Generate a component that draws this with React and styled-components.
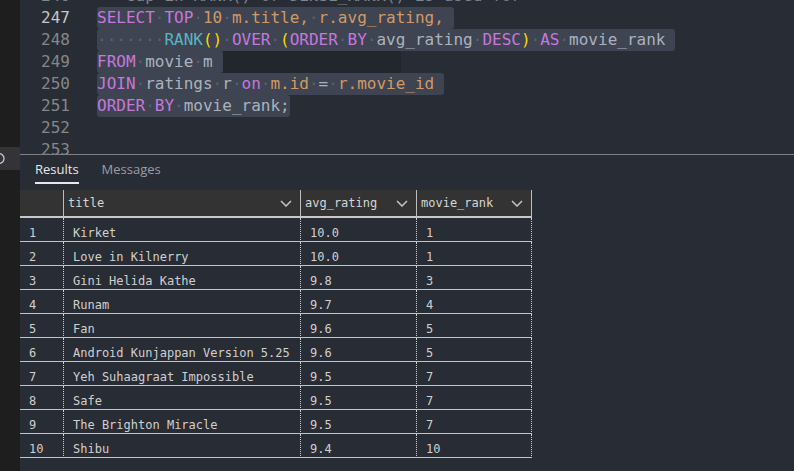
import React from "react";
import styled, { createGlobalStyle } from "styled-components";

const GlobalStyle = createGlobalStyle`
  html, body {
    margin: 0;
    padding: 0;
    background: #282c34;
  }
  body {
    width: 794px;
    height: 471px;
    overflow: hidden;
  }
`;

const Screen = styled.div`
  display: flex;
  width: 794px;
  height: 471px;
  background: #282c34;
  overflow: hidden;
`;

const ActivityStrip = styled.div`
  width: 20px;
  flex-shrink: 0;
  background: #1e1e1e;
  display: flex;
  flex-direction: column;
  padding-top: 147px;
  box-sizing: border-box;
`;

const StripButton = styled.div`
  height: 23px;
  background: #333338;
  display: flex;
  align-items: center;
`;

const Main = styled.div`
  flex: 1;
  display: flex;
  flex-direction: column;
  min-width: 0;
`;

const Editor = styled.div`
  height: 154px;
  flex-shrink: 0;
  overflow: hidden;
  display: flex;
  font-family: "DejaVu Sans Mono", monospace;
  font-size: 16px;
`;

const Gutter = styled.div`
  width: 50px;
  margin-top: -15px;
  text-align: right;
  flex-shrink: 0;
`;

const LineNo = styled.div`
  height: 22px;
  line-height: 22px;
  color: ${({ $active }) => ($active ? "#c6c6c6" : "#858889")};
`;

const Code = styled.div`
  flex: 1;
  margin-top: -15px;
  padding-left: 27px;
`;

const CodeLine = styled.div`
  height: 22px;
  line-height: 22px;
  display: flex;
  white-space: pre;
`;

const Selection = styled.span`
  display: inline-block;
  height: 22px;
  background: #3e4451;
  border-radius: 3px;
  padding-right: ${({ $tail }) => ($tail ? "10px" : "0")};
`;

const HoverGap = styled.span`
  display: inline-block;
  height: 22px;
  width: 178px;
  background: #22262d;
  border-radius: 3px;
`;

const Tok = styled.span`
  color: ${({ $c }) => $c};
`;

const Divider = styled.div`
  height: 1px;
  background: #7d8087;
  flex-shrink: 0;
`;

const Panel = styled.div`
  flex: 1;
  display: flex;
  flex-direction: column;
`;

const TabBar = styled.div`
  display: flex;
  gap: 23px;
  padding-left: 15px;
  margin-bottom: 6px;
`;

const Tab = styled.div`
  font-family: "Open Sans", "Noto Sans", sans-serif;
  font-size: 13px;
  line-height: 16px;
  padding: 6px 0 5px;
  color: ${({ $active }) => ($active ? "#e8e8e8" : "#9a9ea6")};
  border-bottom: 2px solid ${({ $active }) => ($active ? "#e8e8e8" : "transparent")};
`;

const Grid = styled.div`
  display: grid;
  grid-template-columns: 43px 237px 116px 116px;
  width: 512px;
  font-family: "DejaVu Sans Mono", monospace;
  font-size: 12px;
  color: #d0d0d0;
`;

const HeadCell = styled.div`
  height: 26px;
  background: #333333;
  border-bottom: 2px solid #c8c8c8;
  border-left: ${({ $first }) => ($first ? "none" : "1px solid #bdbdbd")};
  border-right: ${({ $last }) => ($last ? "1px solid #bdbdbd" : "none")};
  display: flex;
  align-items: center;
  justify-content: space-between;
  padding: 0 8px 0 4px;
  color: #d6d6d6;
`;

const Cell = styled.div`
  height: 23px;
  line-height: 30px;
  border-bottom: 1px solid #c3c3c3;
  border-left: ${({ $first }) => ($first ? "none" : "1px dotted #d0d0d0")};
  border-right: ${({ $last }) => ($last ? "1px dotted #d0d0d0" : "none")};
  padding-left: 9px;
  white-space: pre;
  overflow: hidden;
`;

const C = {
  kw: "#c678dd",
  num: "#d19a66",
  col: "#d19a66",
  plain: "#abb2bf",
  fn: "#56b6c2",
  br: "#ffd700",
  ws: "#5b6170",
  cm: "#7f848e",
};

const Chevron = () => (
  <svg width="12" height="7" viewBox="0 0 12 7">
    <polyline points="1,1 6,6 11,1" fill="none" stroke="#c5c5c5" strokeWidth="1.5" />
  </svg>
);

const PanelIcon = () => (
  <svg width="20" height="23" viewBox="0 0 20 23">
    <circle cx="-1" cy="11.5" r="5" fill="none" stroke="#c8c8c8" strokeWidth="1.3" />
  </svg>
);

const W = (n = 1) => ["·".repeat(n), "ws"];

const lines = [
  { no: 246, tokens: [["-- Gap in RANK() or DENSE_RANK() is used for", "cm"]], plain: true },
  {
    no: 247,
    active: true,
    tail: true,
    tokens: [
      ["SELECT", "kw"], W(), ["TOP", "kw"], W(), ["10", "num"], W(),
      ["m.title,", "col"], W(), ["r.avg_rating,", "col"],
    ],
  },
  {
    no: 248,
    tail: true,
    tokens: [
      W(7), ["RANK", "fn"], ["()", "br"], W(), ["OVER", "kw"], W(), ["(", "br"],
      ["ORDER", "kw"], W(), ["BY", "kw"], W(), ["avg_rating", "plain"], W(),
      ["DESC", "kw"], [")", "br"], W(), ["AS", "kw"], W(), ["movie_rank", "plain"],
    ],
  },
  {
    no: 249,
    tail: true,
    gap: true,
    tokens: [["FROM", "kw"], W(), ["movie", "plain"], W(), ["m", "plain"]],
  },
  {
    no: 250,
    tail: true,
    tokens: [
      ["JOIN", "kw"], W(), ["ratings", "plain"], W(), ["r", "plain"], W(),
      ["on", "kw"], W(), ["m.id", "col"], W(), ["=", "plain"], W(), ["r.movie_id", "col"],
    ],
  },
  {
    no: 251,
    tokens: [["ORDER", "kw"], W(), ["BY", "kw"], W(), ["movie_rank;", "plain"]],
  },
  { no: 252, tokens: [], plain: true },
  { no: 253, tokens: [], plain: true },
];

const columns = ["title", "avg_rating", "movie_rank"];

const rows = [
  ["Kirket", "10.0", "1"],
  ["Love in Kilnerry", "10.0", "1"],
  ["Gini Helida Kathe", "9.8", "3"],
  ["Runam", "9.7", "4"],
  ["Fan", "9.6", "5"],
  ["Android Kunjappan Version 5.25", "9.6", "5"],
  ["Yeh Suhaagraat Impossible", "9.5", "7"],
  ["Safe", "9.5", "7"],
  ["The Brighton Miracle", "9.5", "7"],
  ["Shibu", "9.4", "10"],
];

const renderTokens = (tokens) =>
  tokens.map(([text, type], i) => (
    <Tok key={i} $c={C[type]}>
      {text}
    </Tok>
  ));

export default function App() {
  return (
    <>
      <GlobalStyle />
      <Screen>
        <ActivityStrip>
          <StripButton>
            <PanelIcon />
          </StripButton>
        </ActivityStrip>
        <Main>
          <Editor>
            <Gutter>
              {lines.map((l) => (
                <LineNo key={l.no} $active={l.active}>
                  {l.no}
                </LineNo>
              ))}
            </Gutter>
            <Code>
              {lines.map((l) => (
                <CodeLine key={l.no}>
                  {l.plain ? (
                    renderTokens(l.tokens)
                  ) : (
                    <Selection $tail={l.tail}>{renderTokens(l.tokens)}</Selection>
                  )}
                  {l.gap && <HoverGap />}
                </CodeLine>
              ))}
            </Code>
          </Editor>
          <Divider />
          <Panel>
            <TabBar>
              <Tab $active>Results</Tab>
              <Tab>Messages</Tab>
            </TabBar>
            <Grid>
              <HeadCell $first />
              {columns.map((c, i) => (
                <HeadCell key={c} $last={i === columns.length - 1}>
                  <span>{c}</span>
                  <Chevron />
                </HeadCell>
              ))}
              {rows.map((r, ri) => (
                <React.Fragment key={ri}>
                  <Cell $first>{ri + 1}</Cell>
                  {r.map((v, ci) => (
                    <Cell key={ci} $last={ci === r.length - 1}>
                      {v}
                    </Cell>
                  ))}
                </React.Fragment>
              ))}
            </Grid>
          </Panel>
        </Main>
      </Screen>
    </>
  );
}
